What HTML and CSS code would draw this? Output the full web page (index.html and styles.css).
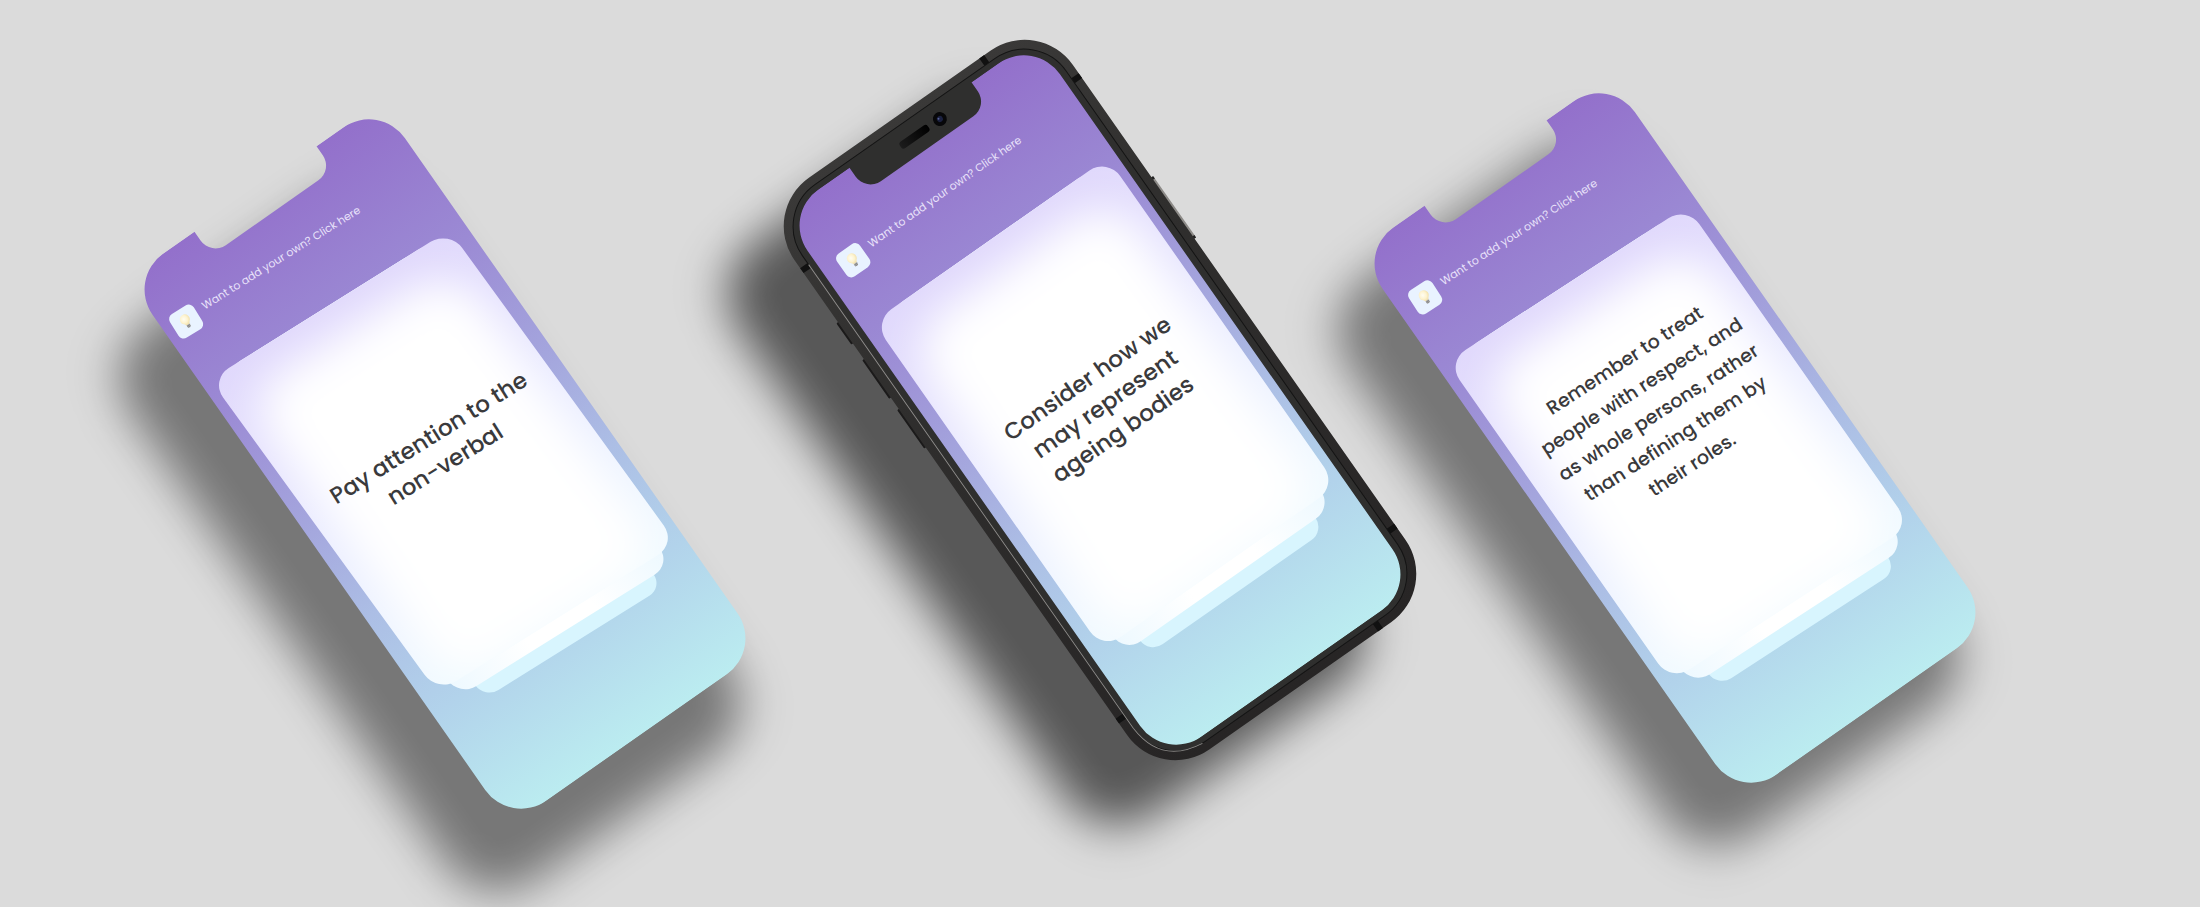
FILE: index.html
```html
<!DOCTYPE html>
<html lang="en">
<head>
<meta charset="utf-8">
<meta name="viewport" content="width=device-width, initial-scale=1">
<title>Reminder cards</title>
<link rel="stylesheet" href="styles.css">
</head>
<body>
<svg class="defs" width="0" height="0" aria-hidden="true">
  <defs>
    <linearGradient id="sky" x1="0" y1="0" x2="0" y2="1">
      <stop offset="0" stop-color="#9370cb"/>
      <stop offset=".24" stop-color="#9b8ad4"/>
      <stop offset=".45" stop-color="#a4a5dd"/>
      <stop offset=".62" stop-color="#acbee5"/>
      <stop offset=".8" stop-color="#b2d3eb"/>
      <stop offset="1" stop-color="#bbecf0"/>
    </linearGradient>
    <linearGradient id="frame" x1="0" y1="0" x2="0" y2="1">
      <stop offset="0" stop-color="#3a3938"/>
      <stop offset=".3" stop-color="#302f2e"/>
      <stop offset="1" stop-color="#272525"/>
    </linearGradient>
    <linearGradient id="speaker" x1="0" y1="0" x2="1" y2="0">
      <stop offset="0" stop-color="#1c1c1c"/>
      <stop offset="1" stop-color="#000"/>
    </linearGradient>
    <radialGradient id="glass" cx=".42" cy=".4" r=".6">
      <stop offset="0" stop-color="#fffdf2"/>
      <stop offset=".6" stop-color="#fdf3cf"/>
      <stop offset="1" stop-color="#f1dfaa"/>
    </radialGradient>
  </defs>
  <symbol id="panel" viewBox="0 0 310 668">
    <path fill="url(#sky)" d="M45 0H83V11A18 18 0 0 0 101 29H214A18 18 0 0 0 232 11V0H265A44 44 0 0 1 309 44V624A44 44 0 0 1 265 668H45A44 44 0 0 1 1 624V44A44 44 0 0 1 45 0Z"/>
  </symbol>
  <symbol id="bulb" viewBox="0 0 12 16">
    <path fill="url(#glass)" d="M6 0.5A5 5 0 0 1 9.2 9.3Q8.2 10.2 8 11.5H4Q3.800 10.200 2.800 9.300A5 5 0 0 1 6 .5Z"/>
    <path fill="#a9a9a6" d="M4.200 11.500H7.800V14Q6 15.800 4.200 14Z"/>
    <path stroke="#77777a" stroke-width=".6" d="M4.200 12.600H7.800M4.500 13.900H7.500"/>
  </symbol>
</svg>

<main class="board">
  <article class="phone phone-first">
    <div class="shadow"></div>
    <svg class="panel" aria-hidden="true"><use href="#panel"/></svg>
    <div class="screen">
      <a class="add" href="#add"><span class="tile"><svg class="bulb" aria-hidden="true"><use href="#bulb"/></svg></span>Want to add your own? Click here</a>
      <section class="stack">
        <div class="sheet sheet-back"></div>
        <div class="sheet sheet-middle"></div>
        <div class="sheet sheet-front"></div>
        <h2 class="message">Pay attention to the<br>non-verbal</h2>
      </section>
    </div>
  </article>

  <article class="phone phone-framed">
    <div class="shadow"></div>
    <svg class="device" viewBox="-20 -20 350 708" aria-hidden="true">
      <g fill="#1b1a1a">
        <rect x="-17" y="120" width="6" height="26" rx="1"/>
        <rect x="-17" y="165" width="6" height="47" rx="1"/>
        <rect x="-17" y="226" width="6" height="47" rx="1"/>
      </g>
      <rect x="322" y="182" width="5" height="73" rx="1" fill="#8d8b88"/>
      <path stroke="#222" stroke-width="4" d="M325 181V184M325 253V256"/>
      <rect x="-15" y="-15" width="340" height="698" rx="59" fill="url(#frame)"/>
      <g stroke="#111" stroke-width="6">
        <path d="M255 -15V-6M316 57H325M-15 57H-6M-15 607H-6M316 607H325M253 674V683"/>
      </g>
      <rect x="-6" y="-6" width="322" height="680" rx="51" fill="#2f2f2e" stroke="#141414"/>
      <path d="M-6 56V622Q-4 668 42 674" fill="none" stroke="#8c8a88"/>
      <rect x="137" y="8" width="34" height="8" rx="3" fill="url(#speaker)"/>
      <circle cx="185" cy="12" r="7" fill="#070709"/>
      <circle cx="185" cy="12" r="3" fill="#1b2140"/>
      <circle cx="184" cy="11" r="1" fill="#59639a"/>
    </svg>
    <svg class="panel" aria-hidden="true"><use href="#panel"/></svg>
    <div class="screen">
      <a class="add" href="#add"><span class="tile"><svg class="bulb" aria-hidden="true"><use href="#bulb"/></svg></span>Want to add your own? Click here</a>
      <section class="stack">
        <div class="sheet sheet-back"></div>
        <div class="sheet sheet-middle"></div>
        <div class="sheet sheet-front"></div>
        <h2 class="message">Consider how we<br>may represent<br>ageing bodies</h2>
      </section>
    </div>
  </article>

  <article class="phone phone-last">
    <div class="shadow"></div>
    <svg class="panel" aria-hidden="true"><use href="#panel"/></svg>
    <div class="screen">
      <a class="add" href="#add"><span class="tile"><svg class="bulb" aria-hidden="true"><use href="#bulb"/></svg></span>Want to add your own? Click here</a>
      <section class="stack">
        <div class="sheet sheet-back"></div>
        <div class="sheet sheet-middle"></div>
        <div class="sheet sheet-front"></div>
        <h2 class="message">Remember to treat<br>people with respect, and<br>as whole persons, rather<br>than defining them by<br>their roles.</h2>
      </section>
    </div>
  </article>
</main>
</body>
</html>
```
FILE: styles.css
```css
* { box-sizing: border-box; }

body {
  margin: 0;
  background: #dbdbdb;
  font-family: Poppins, Inter, "Open Sans", sans-serif;
}

.defs { position: absolute; }

.board {
  display: flex;
  align-items: flex-start;
  min-height: 100vh;
  overflow: hidden;
}

.phone {
  --turn: -35deg;
  --tilt: -35deg;
  --skew: 0deg;
  --shade: rgba(0, 0, 0, 0.46);
  position: relative;
  flex: none;
  width: 310px;
  height: 668px;
}

.phone-first { --tilt: -32deg; --skew: 4deg; margin: 130px 0 0 290px; }
.phone-framed { --shade: rgba(0, 0, 0, 0.6); margin: 66px 0 0 345px; }
.phone-last { --tilt: -33deg; --skew: 2deg; margin: 104px 0 0 265px; }

.shadow {
  position: absolute;
  inset: -4px -32px -4px -2px;
  border-radius: 60px;
  background: var(--shade);
  filter: blur(23px);
  transform: rotate(var(--turn)) translate(-68px, 45px);
}

.phone-framed .shadow { inset: -14px -22px -14px -18px; transform: rotate(var(--turn)) translate(-82px, 20px); }
.phone-last .shadow { transform: rotate(var(--turn)) translate(-66px, 22px); }

.panel,
.device {
  position: absolute;
  inset: 0;
  width: 100%;
  height: 100%;
  transform: rotate(var(--turn));
}

.device {
  inset: -20px;
  width: 350px;
  height: 708px;
}

.screen {
  position: relative;
  display: flex;
  flex-direction: column;
  align-items: center;
  height: 100%;
  padding-top: 62px;
  transform: rotate(var(--tilt));
}

.add {
  display: flex;
  align-self: flex-start;
  gap: 8px;
  height: 28px;
  margin: 2px 0 48px 19px;
  color: #e9e2fa;
  font-size: 11px;
  line-height: 20px;
  text-decoration: none;
  white-space: nowrap;
}

.phone-first .add { margin: 0 0 50px -3px; }
.phone-last .add { margin: 4px 0 50px 8px; }

.tile {
  display: grid;
  place-items: center;
  width: 28px;
  height: 28px;
  border-radius: 6px;
  background: #e9f3ff;
}

.bulb { width: 12px; height: 16px; }

.stack {
  position: relative;
  display: grid;
  place-items: center;
  width: 286px;
  height: 400px;
}

.phone-framed .stack { margin-left: 4px; }
.phone-first .stack { width: 282px; height: 386px; margin-top: -2px; }
.phone-last .stack { height: 390px; margin-top: 2px; }

.sheet {
  position: absolute;
  inset: 0;
  border-radius: 22px;
  transform: skewX(var(--skew));
}

.sheet-front {
  overflow: hidden;
  background: linear-gradient(#e0d8fc, #e9ebff 50%, #f0faff);
}

.sheet-front::before {
  content: "";
  position: absolute;
  inset: 38px 22px 0;
  border-radius: 40px;
  background: #fff;
  box-shadow: 0 0 0 6px #fff;
  filter: blur(22px);
}

.sheet-middle {
  inset: 0 16px -15px;
  border-radius: 20px;
  background: linear-gradient(90deg, #eef9ff, #fff 35%, #fff 65%, #eef9ff);
}

.sheet-back {
  inset: 0 36px -30px;
  border-radius: 16px;
  background: #d8f5fe;
}

.message {
  position: relative;
  margin: 0;
  color: #3a3a3c;
  font-size: 23px;
  font-weight: 500;
  line-height: 31px;
  text-align: center;
  white-space: nowrap;
}

.phone-first .message { padding-bottom: 24px; }
.phone-last .message { padding-bottom: 76px; font-size: 19px; }
```
